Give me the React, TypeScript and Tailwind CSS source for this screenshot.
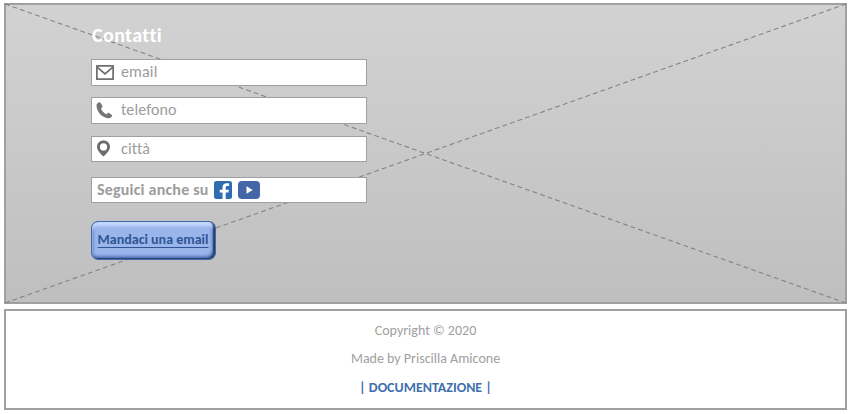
import type { ReactNode } from "react";

function Field({ className, icon, label }: { className: string; icon: ReactNode; label: string }) {
  return (
    <div className={`flex w-[276px] items-center border border-[#a0a0a0] bg-white pl-[4px] ${className}`}>
      <span className="flex w-[25px] shrink-0">{icon}</span>
      <span className="pb-px text-[16px] leading-[20px] tracking-[0.15px] text-[#9c9c9c]">{label}</span>
    </div>
  );
}

function MailIcon() {
  return (
    <svg width="18" height="15" viewBox="0 0 18 15" fill="none" stroke="#6c6c6c" strokeWidth="1.7">
      <rect x="0.9" y="0.9" width="16.2" height="13.2" />
      <path d="M1.2 2.2 9 8.8 16.8 2.2" />
    </svg>
  );
}

function PhoneIcon() {
  return (
    <svg width="17" height="17" viewBox="0 0 17 17" fill="#757575">
      <path d="M3.2.3C1.4.8.3 2.3.5 4.1c.6 6.2 5.5 11.5 11.5 12.2 1.8.2 3.3-.6 4.1-2.2.2-.5.1-.9-.3-1.2l-2.7-2c-.5-.3-.9-.3-1.3.1l-1.3 1.2c-2.8-1.2-4.7-3.2-5.5-5.7l1.2-1.3c.3-.4.4-.8.2-1.2L4.500.8C4.200.3 3.700.1 3.200.3Z" />
    </svg>
  );
}

function PinIcon() {
  return (
    <svg className="mb-px" width="15" height="17" viewBox="0 0 15 17" fill="#6c6c6c">
      <path
        fillRule="evenodd"
        d="M7.500.4C3.800.4 1 3.100 1 6.700 1 10.200 4.700 13.800 7.500 16.600 10.300 13.800 14 10.200 14 6.700 14 3.100 11.200.4 7.500.4Zm0 2.900a3.600 3.600 0 1 1 0 7.200 3.600 3.600 0 0 1 0-7.200Z"
      />
    </svg>
  );
}

function FacebookIcon() {
  return (
    <svg width="18" height="18" viewBox="0 0 18 18">
      <rect width="18" height="18" rx="2.5" fill="#2e6db0" />
      <path
        fill="#fff"
        d="M8.500 18v-6.500H5.700V8.700h2.800V6.500C8.500 3.700 10.200 2.200 12.700 2.200h2.400V5h-1.700c-1.200 0-1.700.6-1.700 1.600v2.100h3.200l-.5 2.800h-2.700V18Z"
      />
    </svg>
  );
}

function YoutubeIcon() {
  return (
    <svg width="22" height="18" viewBox="0 0 22 18">
      <rect width="22" height="18" rx="4" fill="#4466a8" />
      <path d="M8.500 5.200v7.600L14.700 9Z" fill="#fff" />
    </svg>
  );
}

export default function App() {
  return (
    <div className="h-[414px] w-[851px] bg-white px-[4px] pt-[3px] font-['Carlito','Lato',sans-serif]">
      <section className="relative h-[301px] w-[843px] border-2 border-[#a0a0a0] bg-linear-to-b from-[#d2d2d2] to-[#bfbfbf]">
        <svg
          className="absolute -top-[2px] -left-[2px]"
          width="843"
          height="301"
          fill="none"
          stroke="#848484"
          strokeWidth="1.1"
          strokeDasharray="4.800 3.200"
        >
          <path d="M1 1 842 300M1 300 842 1" />
        </svg>
        <div className="relative flex flex-col items-start pt-[18px] pl-[85px]">
          <h2 className="h-[36px] pl-[1px] text-[20px] leading-[24px] font-bold tracking-[0.4px] text-white">Contatti</h2>
          <Field className="h-[27px]" icon={<MailIcon />} label="email" />
          <Field className="mt-[11px] h-[27px]" icon={<PhoneIcon />} label="telefono" />
          <Field className="mt-[12px] h-[26px]" icon={<PinIcon />} label="città" />
          <div className="mt-[15px] flex h-[26px] w-[276px] items-center border border-[#a0a0a0] bg-white pl-[5px]">
            <span className="w-[117px] text-[16px] leading-[20px] font-bold tracking-[0.2px] whitespace-nowrap text-[#9c9c9c]">
              Seguici anche su
            </span>
            <FacebookIcon />
            <span className="ml-[6px]">
              <YoutubeIcon />
            </span>
          </div>
          <button className="mt-[18px] flex h-[39px] w-[125px] items-center justify-center rounded-[7px] border border-[#4468a8] bg-[#9ab5ea] pr-px pb-[2px] text-[14px] font-bold whitespace-nowrap text-[#2f5597] underline decoration-1 underline-offset-3 shadow-[inset_-2px_-1px_1px_#2c406c,inset_0_4px_3px_#c4d8ff,inset_-3px_-3px_3px_#5277b9,inset_2px_0_2px_#6489cd]">
            Mandaci una email
          </button>
        </div>
      </section>
      <footer className="mt-[5px] flex h-[101px] w-[843px] flex-col items-center border-2 border-[#a0a0a0] bg-white pt-[10px] text-[14px] leading-[20px] text-[#a0a0a0]">
        <p>Copyright © 2020</p>
        <p className="mt-[8px]">Made by Priscilla Amicone</p>
        <p className="mt-[9px] font-bold text-[#416fad]">| DOCUMENTAZIONE |</p>
      </footer>
    </div>
  );
}
